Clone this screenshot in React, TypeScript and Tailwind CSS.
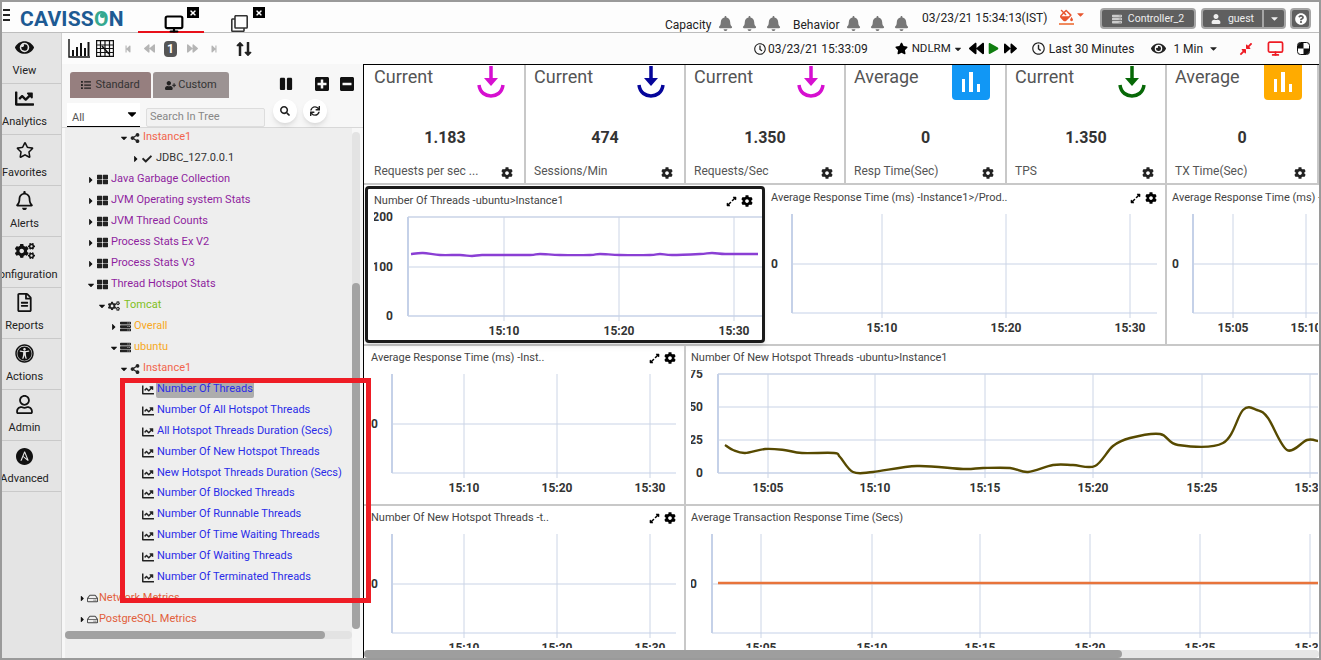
import type { ReactNode } from 'react'
import { Monitor } from 'lucide-react'
import {
  FaBackward,
  FaBell,
  FaCaretDown,
  FaCaretRight,
  FaChartLine,
  FaCheck,
  FaCog,
  FaCogs,
  FaCompressAlt,
  FaExpandAlt,
  FaEye,
  FaFillDrip,
  FaForward,
  FaList,
  FaLongArrowAltDown,
  FaLongArrowAltUp,
  FaMinusSquare,
  FaPause,
  FaPlay,
  FaPlusSquare,
  FaRegBell,
  FaRegClock,
  FaRegClone,
  FaRegFileAlt,
  FaRegHdd,
  FaRegStar,
  FaRegUser,
  FaSearch,
  FaServer,
  FaShareAlt,
  FaStar,
  FaStepBackward,
  FaStepForward,
  FaSync,
  FaThLarge,
  FaTimes,
  FaUniversalAccess,
  FaUser,
  FaUserPlus,
  FaQuestionCircle,
} from 'react-icons/fa'
import { SiAnsible } from 'react-icons/si'

const railItems = [
  { label: 'View', icon: <FaEye size={19} /> },
  { label: 'Analytics', icon: <FaChartLine size={19} /> },
  { label: 'Favorites', icon: <FaRegStar size={18} /> },
  { label: 'Alerts', icon: <FaRegBell size={19} /> },
  { label: 'Configuration', icon: <FaCogs size={20} /> },
  { label: 'Reports', icon: <FaRegFileAlt size={19} /> },
  { label: 'Actions', icon: <FaUniversalAccess size={19} /> },
  { label: 'Admin', icon: <FaRegUser size={19} /> },
  { label: 'Advanced', icon: <SiAnsible size={17} /> },
]

const PURPLE = 'text-[#8f1f9f]'
const BLUE = 'text-[#2a2ce8]'

const treeRows = [
  { pad: 56, open: true, icon: <FaShareAlt size={10} />, text: 'Instance1', color: 'text-[#f2654c]' },
  { pad: 68, open: false, icon: <FaCheck size={10} />, text: 'JDBC_127.0.0.1', color: 'text-[#333]', wide: true },
  { pad: 23, open: false, icon: <FaThLarge size={11} />, text: 'Java Garbage Collection', color: PURPLE },
  { pad: 23, open: false, icon: <FaThLarge size={11} />, text: 'JVM Operating system Stats', color: PURPLE },
  { pad: 23, open: false, icon: <FaThLarge size={11} />, text: 'JVM Thread Counts', color: PURPLE },
  { pad: 23, open: false, icon: <FaThLarge size={11} />, text: 'Process Stats Ex V2', color: PURPLE },
  { pad: 23, open: false, icon: <FaThLarge size={11} />, text: 'Process Stats V3', color: PURPLE },
  { pad: 23, open: true, icon: <FaThLarge size={11} />, text: 'Thread Hotspot Stats', color: PURPLE },
  { pad: 34, open: true, icon: <FaCogs size={12} />, text: 'Tomcat', color: 'text-[#7fbf1c]', wide: true },
  { pad: 46, open: false, icon: <FaServer size={11} />, text: 'Overall', color: 'text-[#f7a823]' },
  { pad: 46, open: true, icon: <FaServer size={11} />, text: 'ubuntu', color: 'text-[#f7a823]' },
  { pad: 56, open: true, icon: <FaShareAlt size={10} />, text: 'Instance1', color: 'text-[#f2654c]' },
]

const leafRows = [
  'Number Of Threads',
  'Number Of All Hotspot Threads',
  'All Hotspot Threads Duration (Secs)',
  'Number Of New Hotspot Threads',
  'New Hotspot Threads Duration (Secs)',
  'Number Of Blocked Threads',
  'Number Of Runnable Threads',
  'Number Of Time Waiting Threads',
  'Number Of Waiting Threads',
  'Number Of Terminated Threads',
]

const tiles = [
  { width: 'w-[162px]', head: 'Current', value: '1.183', label: 'Requests per sec ...', color: '#d60fd0' },
  { width: 'w-[160px]', head: 'Current', value: '474', label: 'Sessions/Min', color: '#05059a' },
  { width: 'w-[160px]', head: 'Current', value: '1.350', label: 'Requests/Sec', color: '#d60fd0' },
  { width: 'w-[161px]', head: 'Average', value: '0', label: 'Resp Time(Sec)', badge: 'bg-[#1197f5]' },
  { width: 'w-[160px]', head: 'Current', value: '1.350', label: 'TPS', color: '#076807' },
  { width: 'w-[152px]', head: 'Average', value: '0', label: 'TX Time(Sec)', badge: 'bg-[#ffab00]' },
]

// small monotone-ish smoothing so the series read as the spline curves in the shot
function smooth(points: number[][]) {
  let d = `M${points[0][0]} ${points[0][1]}`
  for (let i = 0; i < points.length - 1; i++) {
    const p0 = points[i - 1] ?? points[i]
    const p1 = points[i]
    const p2 = points[i + 1]
    const p3 = points[i + 2] ?? p2
    const c1x = p1[0] + (p2[0] - p0[0]) / 6
    const c1y = p1[1] + (p2[1] - p0[1]) / 6
    const c2x = p2[0] - (p3[0] - p1[0]) / 6
    const c2y = p2[1] - (p3[1] - p1[1]) / 6
    d += ` C${c1x} ${c1y} ${c2x} ${c2y} ${p2[0]} ${p2[1]}`
  }
  return d
}

const threadLine = [
  [411, 254], [423, 253], [440, 255], [460, 255], [472, 256], [482, 255], [500, 255], [530, 255],
  [540, 254], [560, 255], [590, 255], [600, 254], [620, 255], [650, 255], [660, 254], [672, 255],
  [700, 254], [712, 253], [725, 254], [745, 254], [758, 254],
]

const hotspotLine = [
  [725, 445], [733, 450], [745, 453], [765, 449], [784, 450], [802, 453], [834, 453], [840, 457],
  [853, 472], [873, 472], [917, 466], [963, 469], [983, 468], [1010, 468], [1028, 472], [1053, 465],
  [1073, 465], [1095, 466], [1113, 446], [1130, 438], [1160, 434], [1178, 445], [1223, 443],
  [1243, 410], [1257, 410], [1268, 418], [1287, 450], [1307, 440], [1318, 441],
]

type ChartProps = {
  className?: string
  title: string
  // page box of the cell, the plot is drawn in page coordinates through the viewBox
  box: { x: number; y: number; w: number; h: number }
  titleH?: number
  left: number
  right: number
  top: number
  bottom: number
  topLine?: boolean
  labelX: number
  ys: { y: number; label: string }[]
  xs: { x: number; label: string }[]
  tools?: boolean
  titleClass?: string
  children?: ReactNode
}

function Chart({ className, title, box, titleH = 24, left, right, top, bottom, topLine, labelX, ys, xs, tools, titleClass, children }: ChartProps) {
  const svgH = box.h - titleH
  return (
    <div className={`flex h-full shrink-0 flex-col overflow-hidden ${className ?? ''}`}>
      <div className={`flex shrink-0 items-center justify-between text-[11px] text-[#444] ${titleClass ?? ''}`} style={{ height: titleH }}>
        <span className="whitespace-nowrap">{title}</span>
        {tools && (
          <span className="flex items-center gap-[4px] text-black">
            <FaExpandAlt size={11} />
            <FaCog size={12} />
          </span>
        )}
      </div>
      <svg className="block shrink-0" width={box.w} height={svgH} viewBox={`${box.x} ${box.y + titleH} ${box.w} ${svgH}`}>
        {ys.map(l => (
          <line key={l.y} x1={left} x2={right} y1={l.y} y2={l.y} stroke="#c9d3e6" />
        ))}
        {xs.map(l => (
          <line key={l.x} x1={l.x} x2={l.x} y1={top} y2={bottom + 5} stroke="#ccd5e6" />
        ))}
        {topLine && <line x1={left} x2={right} y1={top} y2={top} stroke="#c9d3e6" />}
        <line x1={left} x2={right} y1={bottom} y2={bottom} stroke="#c5d1e8" />
        <line x1={left} x2={left} y1={top} y2={bottom} stroke="#c5d1e8" strokeWidth="2" />
        {ys.map(l => (
          <text key={l.y} x={labelX} y={l.y + 4} textAnchor="end" className="fill-[#333] text-[12px] font-bold">
            {l.label}
          </text>
        ))}
        {xs.map(l => (
          <text key={l.x} x={l.x} y={bottom + 19} textAnchor="middle" className="fill-[#333] text-[12px] font-bold">
            {l.label}
          </text>
        ))}
        {children}
      </svg>
    </div>
  )
}

function DownArrow({ color }: { color: string }) {
  return (
    <svg className="-mr-[1px]" width="28" height="34" viewBox="0 0 28 34" fill="none">
      <path d="M14 1V15" stroke={color} strokeWidth="3.5" />
      <path d="M7 13H21L14 21Z" fill={color} />
      <path d="M2 20C3 28 9 31 14 31C19 31 25 28 26 20" stroke={color} strokeWidth="3.5" />
    </svg>
  )
}

function BarBadge({ className }: { className: string }) {
  return (
    <div className={`-mr-[5px] flex h-[35px] w-[38px] items-end justify-center gap-[4px] rounded-b-[4px] pb-[8px] ${className}`}>
      <span className="h-[13px] w-[3.5px] bg-white" />
      <span className="h-[20px] w-[3.5px] bg-white" />
      <span className="h-[8px] w-[3.5px] bg-white" />
    </div>
  )
}

function Tile({ tile }: { tile: (typeof tiles)[number] }) {
  return (
    <div className={`flex h-full shrink-0 flex-col border-r-2 border-[#c8c8c8] pl-[8px] first:pl-[10px] ${tile.width}`}>
      <div className="flex h-[36px] items-start justify-between pr-[20px]">
        <span className="mt-[1px] text-[18px] leading-[22px] text-[#555]">{tile.head}</span>
        {tile.badge ? <BarBadge className={tile.badge} /> : <DownArrow color={tile.color as string} />}
      </div>
      <div className="mt-[27px] pr-[8px] text-center text-[16px] font-bold leading-[20px] text-[#333]">{tile.value}</div>
      <div className="mt-[15px] flex items-center justify-between pr-[11px] text-[12px] leading-[16px] text-[#555]">
        <span>{tile.label}</span>
        <FaCog size={12} className="mt-[3px] text-[#222]" />
      </div>
    </div>
  )
}

function CloseBox({ className }: { className: string }) {
  return (
    <span className={`absolute top-[5px] flex h-[11px] w-[12px] items-center justify-center bg-black text-white ${className}`}>
      <FaTimes size={8} />
    </span>
  )
}

function Header() {
  return (
    <div className="flex h-[31px] shrink-0 items-start border-b border-[#bdbdbd] bg-[#fdfdfd]">
      <div className="ml-[1px] mt-[7px] flex w-[7px] flex-col gap-[3px]">
        <span className="h-[2px] bg-[#222]" />
        <span className="h-[2px] bg-[#222]" />
        <span className="h-[2px] bg-[#222]" />
      </div>
      <div className="ml-[10px] mt-[5px] w-[110px] whitespace-nowrap text-[21px] font-bold leading-[24px] tracking-[0.2px] text-[#1d5a93] [font-family:'Liberation_Sans',sans-serif]">
        CAVISS
        <span className="relative text-[#35a88f]">
          O
          <span className="absolute left-[6px] top-[6px] h-[5px] w-[5px] rounded-full bg-[#35a88f]" />
        </span>
        N
      </div>
      <div className="relative ml-[8px] flex h-[31px] w-[66px] items-end border-b-2 border-[#e8101a] pl-[26px]">
        <Monitor size={20} strokeWidth={2.6} className="-mb-[3px] text-black" />
        <CloseBox className="left-[49px]" />
      </div>
      <div className="relative ml-[27px] flex h-[31px] w-[66px] items-end pb-[1px]">
        <FaRegClone size={17} className="text-[#333]" />
        <CloseBox className="left-[22px]" />
      </div>
      <div className="ml-[368px] mt-[15px] flex items-center text-[12px] leading-[16px] text-[#222]">
        <span className="w-[53px]">Capacity</span>
        <span className="-mt-[3px] flex gap-[9px] text-[#777]">
          <FaBell size={15} />
          <FaBell size={15} />
          <FaBell size={15} />
        </span>
        <span className="ml-[12px] w-[53px]">Behavior</span>
        <span className="-mt-[3px] flex gap-[9px] text-[#777]">
          <FaBell size={15} />
          <FaBell size={15} />
          <FaBell size={15} />
        </span>
      </div>
      <div className="ml-[13px] mt-[8px] w-[137px] whitespace-nowrap text-[12px] leading-[16px] text-[#222]">03/23/21 15:34:13(IST)</div>
      <div className="mt-[7px] flex items-start text-[#e8552f]">
        <span className="flex flex-col items-center">
          <FaFillDrip size={13} />
          <span className="mt-[1px] h-[2px] w-[15px] bg-[#f08a5d]" />
        </span>
        <FaCaretDown size={11} className="ml-[1px]" />
      </div>
      <div className="ml-[14px] mt-[6px] flex h-[21px] w-[96px] items-center justify-center gap-[6px] rounded-[4px] border-2 border-[#a5a5a5] bg-[#5f5f5f] text-[10.5px] text-[#eee]">
        <FaServer size={10} className="text-[#ccc]" />
        Controller_2
      </div>
      <div className="ml-[5px] mt-[6px] flex h-[21px] w-[85px] items-center rounded-[4px] border-2 border-[#a5a5a5] bg-[#5f5f5f] text-[10.5px] text-[#eee]">
        <span className="flex h-full w-[61px] items-center justify-center gap-[7px] border-r-2 border-[#a5a5a5]">
          <FaUser size={10} />
          guest
        </span>
        <FaCaretDown size={11} className="ml-[5px]" />
      </div>
      <div className="ml-[4px] mt-[6px] flex h-[21px] w-[21px] items-center justify-center rounded-[4px] border-2 border-[#a5a5a5] bg-[#5f5f5f] text-white">
        <FaQuestionCircle size={12} />
      </div>
    </div>
  )
}

function Toolbar() {
  return (
    <div className="flex h-[31px] shrink-0 items-center bg-[#fcfcfc] text-[12px] text-[#222]">
      <svg className="ml-[6px]" width="22" height="19" viewBox="0 0 22 19">
        <path d="M1 0V18H22" fill="none" stroke="#111" strokeWidth="1.4" />
        <path d="M4 11h2v6H4zM8 8h2v9H8zM12 4h2v13h-2zM16 9h2v8h-2zM19.500 3h2v14h-2z" fill="#111" />
      </svg>
      <svg className="ml-[6px]" width="18" height="17" viewBox="0 0 18 17" fill="none" stroke="#111" strokeWidth="1.2">
        <path d="M.6.6h16.8v15.8H.6zM.6 5h16.8M.6 8.500h16.800M.6 12.500h16.800M4.500.6v15.800M9 .6v15.800M13.500.6v15.800" />
        <path d="M6 6l7 8" strokeWidth="1.600" />
      </svg>
      <span className="ml-[10px] flex items-center text-[#b5b5b5]">
        <FaStepBackward size={8} />
        <FaBackward size={11} className="ml-[12px]" />
      </span>
      <span className="ml-[9px] flex h-[16px] w-[13px] items-center justify-center rounded-[4px] bg-[#555] text-[12px] font-bold text-white">1</span>
      <span className="ml-[10px] flex items-center text-[#b5b5b5]">
        <FaForward size={11} />
        <FaStepForward size={8} className="ml-[12px]" />
      </span>
      <span className="ml-[14px] flex text-[#222]">
        <FaLongArrowAltUp size={16} className="-mr-[8px]" />
        <FaLongArrowAltDown size={16} />
      </span>
      <span className="ml-[498px] flex items-center gap-[2px] whitespace-nowrap">
        <FaRegClock size={12} />
        03/23/21 15:33:09
      </span>
      <FaStar size={13} className="ml-[27px] text-black" />
      <span className="ml-[4px] text-[11.5px]">NDLRM</span>
      <FaCaretDown size={10} className="ml-[2px]" />
      <FaBackward size={15} className="ml-[6px] text-black" />
      <FaPlay size={11} className="ml-[4px] text-[#0f7d0f]" />
      <FaForward size={13} className="ml-[5px] text-black" />
      <FaRegClock size={13} className="ml-[15px]" />
      <span className="ml-[4px] whitespace-nowrap">Last 30 Minutes</span>
      <FaEye size={15} className="ml-[17px]" />
      <span className="ml-[7px] whitespace-nowrap">1 Min</span>
      <FaCaretDown size={11} className="ml-[5px]" />
      <FaCompressAlt size={14} className="ml-[20px] text-[#ee1c25]" />
      <Monitor size={17} strokeWidth={2.4} className="ml-[14px] text-[#ee1c25]" />
      <svg className="ml-[13px]" width="13" height="13" viewBox="0 0 13 13">
        <rect x=".5" y=".5" width="12" height="12" rx="3" fill="#fff" stroke="#111" />
        <path d="M3 1h3.500v5.500H1V3a2 2 0 0 1 2-2zM6.500 6.500H12V10a2 2 0 0 1-2 2H6.500z" fill="#111" />
      </svg>
    </div>
  )
}

function TreePanel() {
  return (
    <div className="flex h-full w-[301px] shrink-0 flex-col bg-[#f7f7f7]">
      <div className="flex h-[34px] shrink-0 items-end pl-[8px] text-[11px] text-[#333]">
        <span className="flex h-[26px] w-[81px] items-center justify-center gap-[4px] rounded-t-[3px] bg-[#967f7f]">
          <FaList size={10} className="text-[#222]" />
          Standard
        </span>
        <span className="ml-[2px] flex h-[26px] w-[76px] items-center justify-center gap-[2px] rounded-t-[3px] bg-[#9c9393]">
          <FaUserPlus size={11} className="text-[#222]" />
          Custom
        </span>
        <FaPause size={14} className="mb-[7px] ml-[50px] text-[#111]" />
        <FaPlusSquare size={16} className="mb-[6px] ml-[21px] text-[#111]" />
        <FaMinusSquare size={16} className="mb-[6px] ml-[9px] text-[#111]" />
      </div>
      <div className="flex h-[30px] shrink-0 items-start border-b border-[#d8d8d8] pl-[5px]">
        <div className="mt-[5px] flex h-[24px] w-[73px] items-end justify-between border-b border-black bg-white pl-[5px] pr-[1px] text-[11px] text-[#555]">
          <span>All</span>
          <FaCaretDown size={14} className="mb-[5px] text-black" />
        </div>
        <div className="ml-[6px] mt-[10px] flex h-[19px] w-[119px] items-center rounded-[2px] border border-[#ddd] bg-[#f2f2f2] pl-[3px] text-[11px] text-[#888]">
          Search In Tree
        </div>
        <span className="ml-[8px] mt-[1px] flex h-[24px] w-[24px] items-center justify-center rounded-full bg-white text-[#222] shadow-md">
          <FaSearch size={10} />
        </span>
        <span className="ml-[6px] mt-[1px] flex h-[24px] w-[24px] items-center justify-center rounded-full bg-white text-[#222] shadow-md">
          <FaSync size={10} />
        </span>
      </div>
      <div className="flex min-h-0 flex-1 pl-[3px]">
        <div className="flex w-[287px] flex-col bg-[#eeeeee]">
          <div className="h-[500px] overflow-hidden text-[11px]">
            <div className="-mt-[1px]">
              {treeRows.map((row, i) => (
                <div key={i} className="flex h-[21px] items-center" style={{ paddingLeft: row.pad }}>
                  <span className="-ml-[2px] w-[11px] text-[#111]">
                    {row.open ? <FaCaretDown size={10} /> : <FaCaretRight size={10} />}
                  </span>
                  <span className="text-[#222]">{row.icon}</span>
                  <span className={`${row.wide ? 'ml-[4px]' : 'ml-[3px]'} whitespace-nowrap ${row.color}`}>{row.text}</span>
                </div>
              ))}
              {leafRows.map((text, i) => (
                <div key={text} className={`flex h-[21px] items-center pl-[77px] ${i === 5 ? '-mt-[1px]' : ''}`}>
                  <FaChartLine size={12} className="text-[#222]" />
                  <span className={`ml-[2px] whitespace-nowrap px-[1px] ${BLUE} ${i === 0 ? 'rounded-[2px] bg-[#adadad]' : ''}`}>{text}</span>
                </div>
              ))}
              <div className="flex h-[21px] items-center pl-[13px]">
                <FaCaretRight size={9} className="text-[#111]" />
                <FaRegHdd size={11} className="text-[#444]" />
                <span className="ml-[1px] whitespace-nowrap text-[#e2603c]">Network Metrics</span>
              </div>
              <div className="flex h-[21px] items-center pl-[13px]">
                <FaCaretRight size={9} className="text-[#111]" />
                <FaRegHdd size={11} className="text-[#444]" />
                <span className="ml-[1px] whitespace-nowrap text-[#e2603c]">PostgreSQL Metrics</span>
              </div>
            </div>
          </div>
          <div className="mt-[3px] h-[8px] w-full rounded-full bg-[#e3e3e3]">
            <div className="h-full w-[260px] rounded-full bg-[#a1a1a1]" />
          </div>
        </div>
        <div className="mt-[4px] flex h-[497px] w-[8px] flex-col justify-end rounded-full bg-[#e3e3e3]">
          <div className="h-[346px] rounded-full bg-[#a3a3a3]" />
        </div>
      </div>
    </div>
  )
}

function Main() {
  return (
    <div className="flex h-full min-w-0 flex-1 flex-col border-l border-t border-black bg-white text-[#444]">
      <div className="flex h-[120px] shrink-0 border-b-2 border-[#c8c8c8]">
        {tiles.map((tile, i) => (
          <Tile key={i} tile={tile} />
        ))}
      </div>
      <div className="flex h-[161px] shrink-0 border-b-2 border-[#c8c8c8]">
        <div className="w-[402px] shrink-0 p-[1px]">
          <Chart
            className="rounded-[4px] border-[3px] border-[#1a1a1a] bg-white pl-[6px] shadow-md"
            titleClass="pr-[9px] pt-[3px]"
            box={{ x: 374, y: 189, w: 388, h: 151 }}
            titleH={21}
            title="Number Of Threads -ubuntu>Instance1"
            tools
            left={408}
            right={762}
            top={217}
            bottom={316}
            topLine
            labelX={393}
            ys={[{ y: 217, label: '200' }, { y: 267, label: '100' }, { y: 316, label: '0' }]}
            xs={[{ x: 504, label: '15:10' }, { x: 619, label: '15:20' }, { x: 734, label: '15:30' }]}
          >
            <path d={smooth(threadLine)} fill="none" stroke="#8a3fd4" strokeWidth="2.4" />
          </Chart>
        </div>
        <div className="w-[401px] shrink-0 border-r-2 border-[#c8c8c8]">
          <Chart
            className="pl-[5px] pr-[8px]"
            titleClass="pt-[2px]"
            box={{ x: 771, y: 185, w: 386, h: 159 }}
            title="Average Response Time (ms) -Instance1>/Prod.."
            tools
            left={792}
            right={1157}
            top={214}
            bottom={313}
            labelX={778}
            ys={[{ y: 264, label: '0' }]}
            xs={[{ x: 882, label: '15:10' }, { x: 1006, label: '15:20' }, { x: 1130, label: '15:30' }]}
          />
        </div>
        <div className="min-w-0 flex-1 overflow-hidden">
          <Chart
            className="pl-[5px]"
            titleClass="pt-[2px]"
            box={{ x: 1172, y: 185, w: 146, h: 159 }}
            title="Average Response Time (ms) -"
            left={1193}
            right={1318}
            top={214}
            bottom={313}
            labelX={1179}
            ys={[{ y: 264, label: '0' }]}
            xs={[{ x: 1233, label: '15:05' }, { x: 1306, label: '15:10' }]}
          />
        </div>
      </div>
      <div className="flex h-[160px] shrink-0 border-b-2 border-[#c8c8c8]">
        <div className="w-[322px] shrink-0 border-r-2 border-[#c8c8c8]">
          <Chart
            className="pl-[7px] pr-[8px]"
            box={{ x: 371, y: 346, w: 305, h: 158 }}
            title="Average Response Time (ms) -Inst.."
            tools
            left={392}
            right={676}
            top={374}
            bottom={473}
            labelX={378}
            ys={[{ y: 424, label: '0' }]}
            xs={[{ x: 464, label: '15:10' }, { x: 557, label: '15:20' }, { x: 650, label: '15:30' }]}
          />
        </div>
        <div className="min-w-0 flex-1 overflow-hidden">
          <Chart
            className="pl-[5px]"
            box={{ x: 691, y: 346, w: 627, h: 158 }}
            title="Number Of New Hotspot Threads -ubuntu>Instance1"
            left={718}
            right={1318}
            top={374}
            bottom={473}
            topLine
            labelX={703}
            ys={[{ y: 374, label: '75' }, { y: 407, label: '50' }, { y: 440, label: '25' }, { y: 473, label: '0' }]}
            xs={[
              { x: 768, label: '15:05' },
              { x: 875, label: '15:10' },
              { x: 985, label: '15:15' },
              { x: 1093, label: '15:20' },
              { x: 1202, label: '15:25' },
              { x: 1310, label: '15:30' },
            ]}
          >
            <path d={smooth(hotspotLine)} fill="none" stroke="#574a00" strokeWidth="2.4" />
          </Chart>
        </div>
      </div>
      <div className="flex min-h-0 flex-1 overflow-hidden">
        <div className="w-[322px] shrink-0 border-r-2 border-[#c8c8c8]">
          <Chart
            className="pl-[7px] pr-[8px]"
            box={{ x: 371, y: 506, w: 305, h: 142 }}
            title="Number Of New Hotspot Threads -t.."
            tools
            left={392}
            right={676}
            top={534}
            bottom={633}
            labelX={378}
            ys={[{ y: 584, label: '0' }]}
            xs={[{ x: 464, label: '15:10' }, { x: 557, label: '15:20' }, { x: 650, label: '15:30' }]}
          />
        </div>
        <div className="min-w-0 flex-1 overflow-hidden">
          <Chart
            className="pl-[5px]"
            box={{ x: 691, y: 506, w: 627, h: 142 }}
            title="Average Transaction Response Time (Secs)"
            left={712}
            right={1318}
            top={534}
            bottom={633}
            labelX={697}
            ys={[{ y: 584, label: '0' }]}
            xs={[
              { x: 761, label: '15:05' },
              { x: 872, label: '15:10' },
              { x: 980, label: '15:15' },
              { x: 1090, label: '15:20' },
              { x: 1200, label: '15:25' },
              { x: 1310, label: '15:30' },
            ]}
          >
            <line x1={718} x2={1318} y1={583} y2={583} stroke="#e8743b" strokeWidth="2.6" />
          </Chart>
        </div>
      </div>
      <div className="h-[8px] shrink-0 rounded-full bg-[#e6e6e6]">
        <div className="h-full w-[758px] rounded-full bg-[#9e9e9e]" />
      </div>
    </div>
  )
}

export default function App() {
  return (
    <div className="relative flex h-[660px] w-[1321px] flex-col overflow-hidden border-2 border-[#9a9a9a] bg-white [font-family:Roboto,sans-serif]">
      <Header />
      <div className="flex min-h-0 flex-1">
        <div className="w-[60px] shrink-0 overflow-hidden border-r border-[#d0d0d0] bg-[#e4e4e4]">
          {railItems.map(item => (
            <div key={item.label} className="flex h-[51px] flex-col items-center justify-end border-b border-[#c9c9c9] pb-[5px] pr-[14px]">
              <span className="mb-[7px] flex h-[22px] items-end text-[#111]">{item.icon}</span>
              <span className="whitespace-nowrap text-[11px] leading-[14px] text-[#222]">{item.label}</span>
            </div>
          ))}
        </div>
        <div className="flex min-w-0 flex-1 flex-col">
          <Toolbar />
          <div className="flex min-h-0 flex-1">
            <TreePanel />
            <Main />
          </div>
        </div>
      </div>
      {/* annotation box drawn over the tree in the screenshot */}
      <div className="absolute left-[118px] top-[376px] h-[225px] w-[251px] border-[5px] border-[#ee1c25]" />
    </div>
  )
}
